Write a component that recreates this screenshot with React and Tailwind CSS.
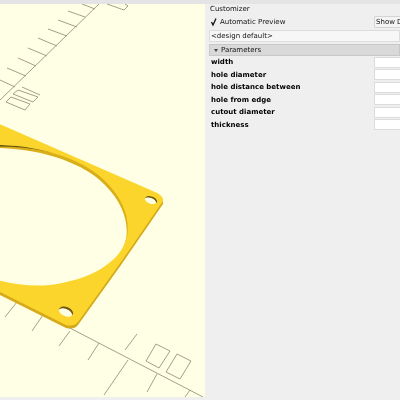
const params = ['width', 'hole diameter', 'hole distance between', 'hole from edge', 'cutout diameter', 'thickness'];

const outline = 'M-10 120 L155 192 Q164 196 163 201 L121 262 L78 322 Q74 327 66 325 L-10 287 Z';
const cutout = 'M-10 145 C40 144 85 160 106 182 C124 200 130 220 127 236 C122 262 90 280 50 285 C30 287 10 284 -10 278 Z';
const hole1 = 'M145 198 A6 3.6 18 1 1 157 202 A6 3.6 18 1 1 145 198 Z';
const hole2 = 'M59 309 A7 4.4 22 1 1 73 314 A7 4.4 22 1 1 59 309 Z';

const grid = [
  'M99 4 L-2 102',
  'M82 4 L95 9', 'M68 11 L85 17', 'M58 20 L77 27', 'M48 29 L67 36', 'M38 38 L57 46', 'M28 48 L47 56', 'M18 58 L36 66', 'M7 68 L26 76', 'M0 80 L15 87',
  'M107 4 L124 10 L128 6 L125 4',
  'M22 87 L40 95', 'M13 94 L33 102 L38 97 L18 90 Z', 'M6 102 L25 110 L30 104 L11 97 Z',
  'M17 302 L5 317', 'M43 315 L32 331', 'M70 331 L59 346', 'M99 343 L88 360',
  'M66 326 L203 397', 'M137 334 L125 350', 'M128 360 L104 395', 'M157 374 L147 392', 'M190 390 L185 397',
  'M156 344 L170 351 L159 368 L146 361 Z', 'M177 354 L191 361 L180 379 L166 372 Z',
];

function Viewport() {
  return (
    <svg width="205" height="393" viewBox="0 4 205 393" className="block">
      <g fill="none" stroke="#98957f" strokeWidth="0.9">
        {grid.map((d) => <path key={d} d={d} />)}
      </g>
      <path d={outline} fill="#d4aa1a" transform="translate(0 3)" />
      <path d={cutout} fill="#d8ae1a" />
      <path d={cutout} fill="#ffffe5" transform="translate(-1 3)" />
      <path d="M-10 145 C10 144 30 146 50 150" fill="none" stroke="#5f5012" strokeWidth="1.4" transform="translate(0 1)" />
      <path d={hole1} fill="#6f5c14" />
      <path d={hole1} fill="#ffffe5" transform="translate(-1 1.5)" />
      <path d={hole2} fill="#6f5c14" />
      <path d={hole2} fill="#ffffe5" transform="translate(-1 2)" />
      <path d={`${outline} ${cutout} ${hole1} ${hole2}`} fill="#fbd52b" fillRule="evenodd" />
    </svg>
  );
}

export default function App() {
  return (
    <div className="w-[400px] h-[400px] overflow-hidden blur-[0.3px] bg-[#efefef] text-[#111] font-['DejaVu_Sans',sans-serif] text-[7px] flex flex-col">
      <div className="h-[4px] bg-[#e4e4e4] shrink-0" />
      <div className="flex flex-1 min-h-0">
        <div className="w-[205px] h-[393px] bg-[#ffffe5] shrink-0 overflow-hidden">
          <Viewport />
        </div>
        <div className="w-[195px] pl-[4px] shrink-0">
          <div className="h-[10px] pl-[1px] leading-[10px]">Customizer</div>
          <div className="h-[14px] mt-[1px] flex items-center">
            <svg width="11" height="10" viewBox="0 0 11 10" className="shrink-0">
              <path d="M2.5 5 L4 8 L7 1.5" fill="none" stroke="#111" strokeWidth="1.3" />
            </svg>
            <span className="flex-1">Automatic Preview</span>
            <div className="w-[40px] h-[12px] -mr-[14px] shrink-0 bg-[#f4f4f4] border border-[#d4d4d4] rounded-[1px] pl-[1px] leading-[10px] whitespace-nowrap overflow-hidden">Show Details</div>
          </div>
          <div className="h-[12px] mt-[1px] bg-[#f7f7f7] border border-[#dcdcdc] rounded-[1px] pl-[1px] leading-[10px]">&lt;design default&gt;</div>
          <div className="h-[12px] mt-[2px] bg-[#d9d9d9] border border-[#c8c8c8] flex items-center pl-[4px] gap-[3px]">
            <div className="w-0 h-0 border-x-[2.5px] border-x-transparent border-t-[3px] border-t-[#444]" />
            <span>Parameters</span>
          </div>
          <div className="flex flex-col">
            {params.map((p) => (
              <div key={p} className="h-[12.5px] flex items-center justify-between pl-[2px]">
                <span className="font-bold text-black">{p}</span>
                <div className="w-[26px] h-[11px] shrink-0 bg-white border border-r-0 border-[#dcdcdc]" />
              </div>
            ))}
          </div>
        </div>
      </div>
    </div>
  );
}
